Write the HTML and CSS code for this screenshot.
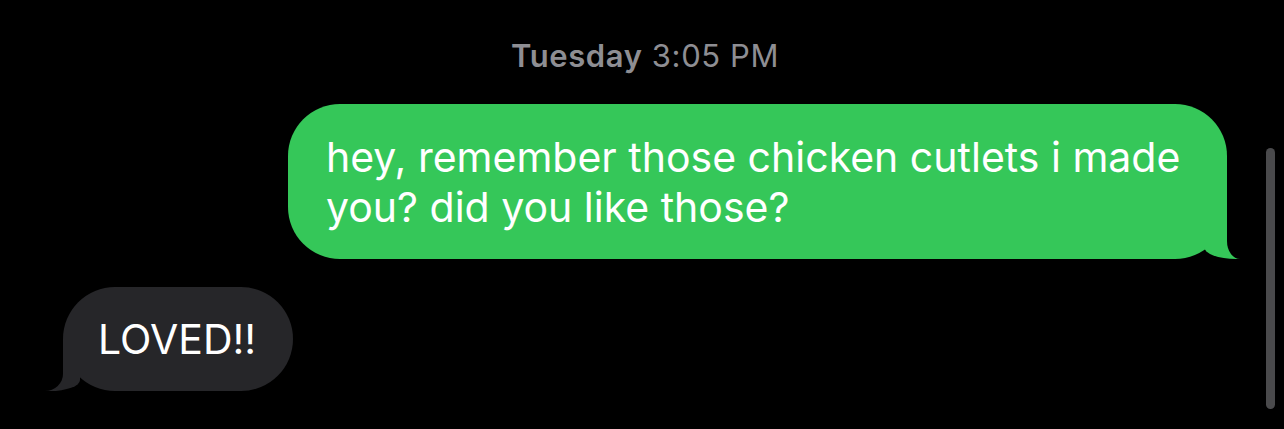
FILE: index.html
```html
<!DOCTYPE html>
<html lang="en">
<head>
  <meta charset="UTF-8">
  <meta name="viewport" content="width=device-width, initial-scale=1.0">
  <title>Messages</title>
  <link rel="stylesheet" href="styles.css">
</head>
<body>
  <main class="thread">
    <div class="stamp"><span class="day">Tuesday</span> 3:05 PM</div>
    <div class="row out">
      <div class="bubble sent">hey, remember those chicken cutlets i made you? did you like those?</div>
    </div>
    <div class="row in">
      <div class="bubble recv">LOVED!!</div>
    </div>
  </main>
  <div class="scrollbar"></div>
</body>
</html>
```

FILE: styles.css
```css
body { margin: 0; background: #000; font-family: Inter, "Noto Sans", sans-serif; color: #fff; }
.thread { padding: 37px 57px 0 63px; }
.stamp { text-align: center; color: #8e8e93; font-size: 31px; line-height: 38px; letter-spacing: 0.6px; }
.stamp .day { font-weight: 600; }
.row { display: flex; }
.row.out { justify-content: flex-end; margin-top: 29px; }
.row.in { justify-content: flex-start; margin-top: 28px; }
.bubble {
  position: relative; font-size: 41px; line-height: 50px; border-radius: 52px;
}
.sent {
  background: #35c759; width: 939px; box-sizing: border-box; padding: 28px 36px 27px 38px;
}
.recv { background: #262629; padding: 27px 37px 27px 35px; }

/* tails */
.sent::before, .sent::after, .recv::before, .recv::after {
  content: ""; position: absolute; bottom: 0; height: 52px;
}
.sent::before { right: -13px; width: 36px; background: #35c759; border-bottom-left-radius: 32px 12px; }
.sent::after { right: -43px; width: 43px; background: #000; border-bottom-left-radius: 13px 18px; }
.recv::before { left: -18px; width: 35px; background: #262629; border-bottom-right-radius: 30px 11px; }
.recv::after { left: -45px; width: 45px; background: #000; border-bottom-right-radius: 18px 17px; }

.scrollbar {
  position: absolute; top: 148px; left: 1266px; width: 9px; height: 261px;
  border-radius: 5px; background: #4a4a4c;
}
```
